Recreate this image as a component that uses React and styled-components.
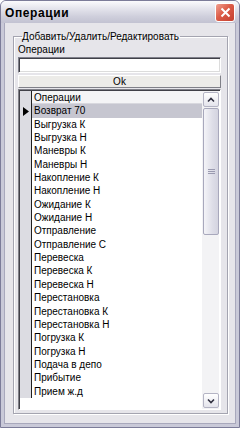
import styled, { createGlobalStyle } from 'styled-components';

const GlobalStyle = createGlobalStyle`
  html, body {
    margin: 0;
    padding: 0;
    background: #ffffff;
  }
  * {
    box-sizing: border-box;
  }
`;

const Window = styled.div`
  width: 240px;
  height: 428px;
  display: flex;
  flex-direction: column;
  border: 1px solid #7c7c99;
  border-radius: 6px 6px 0 0;
  background: #c9c9d8;
  font-family: 'Liberation Sans', Arial, sans-serif;
  font-size: 10px;
  color: #000;
  overflow: hidden;
`;

const TitleBar = styled.div`
  height: 22px;
  flex: none;
  display: flex;
  align-items: center;
  justify-content: space-between;
  padding: 0 4px 0 4px;
  background: linear-gradient(#fbfbfd 0%, #e4e4ec 35%, #cfcfdc 70%, #c2c2d2 100%);
`;

const Title = styled.span`
  font-weight: bold;
  font-size: 12px;
  letter-spacing: 0.6px;
  padding-top: 1px;
`;

const CloseButton = styled.div`
  width: 20px;
  height: 19px;
  border: 1px solid #ffffff;
  border-radius: 3px;
  background: linear-gradient(135deg, #f0a090 0%, #dc5c48 45%, #c44030 100%);
  display: flex;
  align-items: center;
  justify-content: center;
  margin-top: 1px;
`;

const Frame = styled.div`
  flex: 1;
  padding: 0 3px 3px 3px;
  display: flex;
`;

const Body = styled.div`
  flex: 1;
  background: #e6e5ea;
  padding: 7px 7px 9px 8px;
  display: flex;
  border: 1px solid #a8a8bc;
  border-top: none;
`;

const GroupBox = styled.fieldset`
  flex: 1;
  margin: 0;
  padding: 0 6px 3px 4px;
  border: 1px solid #a4a4b0;
  box-shadow: 1px 1px 0 #ffffff, inset 1px 1px 0 #ffffff;
  display: flex;
  flex-direction: column;
  min-width: 0;
`;

const Legend = styled.legend`
  padding: 0 1px 0 0;
  margin-left: 4px;
  white-space: nowrap;
  line-height: 13px;
`;

const Label = styled.div`
  line-height: 13px;
  height: 13px;
`;

const Edit = styled.input`
  height: 16px;
  width: 100%;
  margin: 1px 0 0 0;
  border: 1px solid;
  border-color: #7f7f8a #ffffff #ffffff #7f7f8a;
  box-shadow: inset 1px 1px 0 #404048, inset -1px -1px 0 #dcdcdc;
  background: #fff;
  padding: 0 2px;
  font: inherit;
  outline: none;
`;

const OkButton = styled.button`
  height: 13px;
  width: 100%;
  margin: 2px 0 1px;
  padding: 0;
  border: 1px solid;
  border-color: #ffffff #808088 #808088 #ffffff;
  background: #ecebe8;
  font: inherit;
  line-height: 11px;
`;

const Grid = styled.div`
  flex: 1;
  display: flex;
  border: 1px solid;
  border-color: #808088 #ffffff #ffffff #808088;
  box-shadow: inset 1px 1px 0 #404048;
  background: #fff;
  padding: 1px 0 0 1px;
  overflow: hidden;
`;

const Rows = styled.div`
  flex: 1;
  display: flex;
  flex-direction: column;
  min-width: 0;
`;

const Row = styled.div`
  height: 13.35px;
  flex: none;
  display: flex;
  align-items: stretch;
`;

const Indicator = styled.div`
  width: 12px;
  flex: none;
  background: #dcdce2;
  border-right: 1px solid #202020;
  display: flex;
  align-items: center;
  justify-content: center;
`;

const Cell = styled.div`
  flex: 1;
  padding-left: 2px;
  line-height: 13px;
  white-space: nowrap;
  overflow: hidden;
  background: ${(p) => (p.$selected ? '#c6c6d0' : p.$header ? '#f4f4f6' : '#ffffff')};
  border-bottom: ${(p) => (p.$header ? '1px solid #d8d8de' : 'none')};
`;

const Scrollbar = styled.div`
  width: 17px;
  flex: none;
  display: flex;
  flex-direction: column;
  background: #f3f3f5;
  padding: 1px 0 1px 1px;
  margin-right: 1px;
`;

const ScrollButton = styled.div`
  height: 15px;
  flex: none;
  border: 1px solid #b4b4c4;
  border-radius: 2px;
  background: linear-gradient(#ffffff, #e4e4ec);
  display: flex;
  align-items: center;
  justify-content: center;
`;

const Track = styled.div`
  flex: 1;
  display: flex;
  flex-direction: column;
  padding: 1px 0;
`;

const Thumb = styled.div`
  height: 127px;
  flex: none;
  border: 1px solid #a8a8bc;
  border-radius: 2px;
  background: linear-gradient(90deg, #f4f4f8, #dedee8 60%, #d4d4e0);
  display: flex;
  align-items: center;
  justify-content: center;
`;

const items = [
  'Возврат 70',
  'Выгрузка К',
  'Выгрузка Н',
  'Маневры К',
  'Маневры Н',
  'Накопление К',
  'Накопление Н',
  'Ожидание К',
  'Ожидание Н',
  'Отправление',
  'Отправление С',
  'Перевеска',
  'Перевеска К',
  'Перевеска Н',
  'Перестановка',
  'Перестановка К',
  'Перестановка Н',
  'Погрузка К',
  'Погрузка Н',
  'Подача в депо',
  'Прибытие',
  'Прием ж.д',
];

function Chevron({ down }) {
  return (
    <svg width="8" height="6" viewBox="0 0 8 6">
      <path
        d={down ? 'M1 1.5 L4 4.5 L7 1.5' : 'M1 4.5 L4 1.5 L7 4.5'}
        fill="none"
        stroke="#303040"
        strokeWidth="1.6"
      />
    </svg>
  );
}

export default function App() {
  return (
    <>
      <GlobalStyle />
      <Window>
        <TitleBar>
          <Title>Операции</Title>
          <CloseButton>
            <svg width="11" height="11" viewBox="0 0 11 11">
              <path d="M1.5 1.5 L9.5 9.5 M9.5 1.5 L1.5 9.5" stroke="#fff" strokeWidth="2" />
            </svg>
          </CloseButton>
        </TitleBar>
        <Frame>
          <Body>
            <GroupBox>
              <Legend>Добавить/Удалить/Редактировать</Legend>
              <Label>Операции</Label>
              <Edit type="text" />
              <OkButton type="button">Ok</OkButton>
              <Grid>
                <Rows>
                  <Row>
                    <Indicator />
                    <Cell $header>Операции</Cell>
                  </Row>
                  {items.map((name, i) => (
                    <Row key={name}>
                      <Indicator>
                        {i === 0 && (
                          <svg width="6" height="9" viewBox="0 0 6 9">
                            <path d="M0 0 L6 4.5 L0 9 Z" fill="#000" />
                          </svg>
                        )}
                      </Indicator>
                      <Cell $selected={i === 0}>{name}</Cell>
                    </Row>
                  ))}
                </Rows>
                <Scrollbar>
                  <ScrollButton>
                    <Chevron />
                  </ScrollButton>
                  <Track>
                    <Thumb>
                      <svg width="7" height="6" viewBox="0 0 7 6">
                        <path d="M0 0.5 H7 M0 2.5 H7 M0 4.5 H7" stroke="#9a9ab0" />
                      </svg>
                    </Thumb>
                  </Track>
                  <ScrollButton>
                    <Chevron down />
                  </ScrollButton>
                </Scrollbar>
              </Grid>
            </GroupBox>
          </Body>
        </Frame>
      </Window>
    </>
  );
}
